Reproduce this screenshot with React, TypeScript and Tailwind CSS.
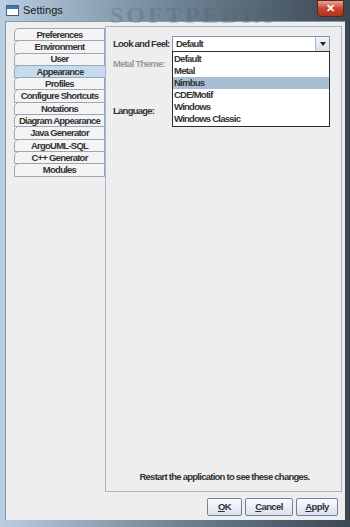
import React from "react"

const tabs = [
  "Preferences",
  "Environment",
  "User",
  "Appearance",
  "Profiles",
  "Configure Shortcuts",
  "Notations",
  "Diagram Appearance",
  "Java Generator",
  "ArgoUML-SQL",
  "C++ Generator",
  "Modules",
]

const looks = ["Default", "Metal", "Nimbus", "CDE/Motif", "Windows", "Windows Classic"]

function Btn({ mn, rest, w }: { mn: string; rest: string; w: string }) {
  return (
    <button
      className={`${w} h-[18px] rounded-[2px] border border-[#70839e] bg-gradient-to-b from-[#fbfcfd] to-[#d9e1ec] text-[9.5px] tracking-[-0.6px] font-bold text-[#2a3340] leading-none`}
    >
      <span className="underline">{mn}</span>
      {rest}
    </button>
  )
}

export default function App() {
  return (
    <div
      className="w-[350px] h-[527px] flex flex-col bg-gradient-to-r from-[#b9cfe1] via-[#6f8596] to-[#3c4752] px-[5px] pb-[7px]"
      style={{ fontFamily: '"Liberation Sans", Arial, sans-serif' }}
    >
      {/* title bar */}
      <div className="h-[21px] flex items-center relative">
        <div className="w-[13px] h-[11px] ml-[1px] border border-[#4b5f77] bg-white flex flex-col">
          <div className="h-[3px] bg-[#3f78c2]" />
        </div>
        <span className="ml-[4px] text-[11px] text-[#151a20]">Settings</span>
        <span
          className="absolute left-[105px] top-[-3px] text-[24px] tracking-[3px] font-bold text-[#53626f] opacity-30"
          style={{ fontFamily: '"Liberation Serif", serif' }}
        >
          SOFTPEDIA
        </span>
        <div className="absolute right-[1px] top-0 w-[27px] h-[17px] rounded-b-[4px] border border-[#5a2420] bg-gradient-to-b from-[#e8a393] via-[#c8452f] to-[#b3321f] flex items-center justify-center">
          <span className="text-white text-[11px] font-bold leading-none">✕</span>
        </div>
      </div>

      {/* client */}
      <div className="flex-1 bg-[#eeeeee] border-l border-t border-[#8598ad] flex flex-col pt-[4px] text-[#333333] text-[9.5px] tracking-[-0.75px] font-bold">
        <div className="h-[466px] flex">
          <div className="w-[91px] ml-[8px] mt-[2px] flex flex-col">
            {tabs.map((t) => (
              <div
                key={t}
                className={`h-[13.3px] -mb-px flex items-center justify-center border border-[#9aa7b8] rounded-tl-[5px] leading-none whitespace-nowrap ${
                  t === "Appearance" ? "bg-[#c6dbf0] border-r-0" : "bg-[#f4f4f4]"
                }`}
              >
                {t}
              </div>
            ))}
          </div>

          <div className="flex-1 mr-[3px] border border-[#a6b7cd] relative flex flex-col pt-[9px] pl-[7px]">
            <div className="flex items-center h-[16px]">
              <span className="w-[59px] whitespace-nowrap">Look and Feel:</span>
              <div className="w-[158px] h-[16px] border border-[#8393a8] bg-white flex items-center">
                <span className="flex-1 pl-[3px]">Default</span>
                <div className="w-[14px] h-full border-l border-[#a9b6c6] bg-gradient-to-b from-[#f3f6fa] to-[#d6e0ec] flex items-center justify-center">
                  <div className="w-0 h-0 border-l-[3.5px] border-r-[3.5px] border-t-[4px] border-l-transparent border-r-transparent border-t-[#222]" />
                </div>
              </div>
            </div>
            <div className="h-[16px] mt-[4px] flex items-center">
              <span className="text-[#9a9a9a]">Metal Theme:</span>
            </div>
            <div className="h-[16px] mt-[31px] flex items-center">
              <span>Language:</span>
            </div>

            <div className="flex-1" />
            <div className="text-center pb-[7px] pr-[5px]">
              Restart the application to see these changes.
            </div>

            {/* open list */}
            <div className="absolute left-[66px] top-[24px] w-[158px] border border-[#2e2e2e] bg-white flex flex-col py-[1px]">
              {looks.map((l) => (
                <div
                  key={l}
                  className={`h-[12px] pl-[1px] flex items-center leading-none ${
                    l === "Nimbus" ? "bg-[#a9bdd5]" : ""
                  }`}
                >
                  {l}
                </div>
              ))}
            </div>
          </div>
        </div>

        <div className="mt-[6px] flex justify-end gap-[3px] pr-[7px]">
          <Btn mn="O" rest="K" w="w-[35px]" />
          <Btn mn="C" rest="ancel" w="w-[48px]" />
          <Btn mn="A" rest="pply" w="w-[42px]" />
        </div>
      </div>
    </div>
  )
}
